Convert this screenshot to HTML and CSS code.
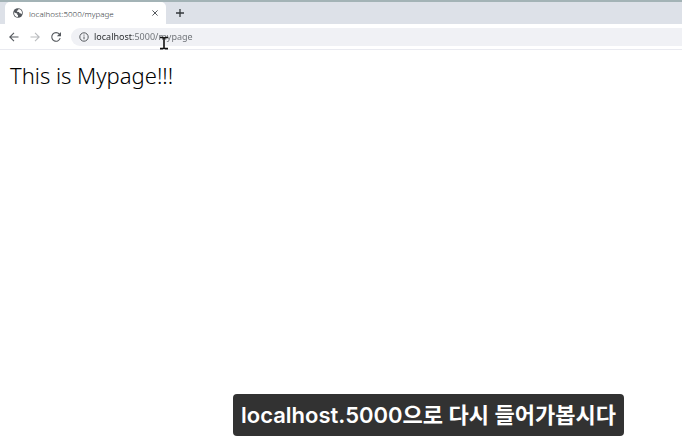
FILE: index.html
```html
<!DOCTYPE html>
<html lang="ko">
<head>
  <meta charset="UTF-8" />
  <meta name="viewport" content="width=device-width, initial-scale=1.0"/>
  <title>localhost:5000/mypage</title>
  <link rel="stylesheet" href="styles.css">
</head>
<body>
  <header class="browser">
    <div class="tab-strip">
      <div class="tab">
        <svg class="favicon" viewBox="0 0 10 10" aria-hidden="true">
          <circle cx="5" cy="5" r="4.8" fill="#53575c"/>
          <path d="M1 4.2 3 5.3 4.2 5.5 4.3 6.7 5.1 7.3 4.8 9C2.6 9 .9 7.2 1 4.2Z" fill="#fff"/>
          <path d="M5.4 1 5.2 2.2 3.8 2.7 4 3.8 6 4 6.6 5.3 8.2 5.5 8.9 6.2C9.6 3.7 8 1.2 5.4 1Z" fill="#fff"/>
        </svg>
        <span class="tab-title">localhost:5000/mypage</span>
        <button type="button" class="tab-close" aria-label="Close tab">
          <svg viewBox="0 0 8 8"><path d="M1.4 1.4 6.6 6.6M6.6 1.4 1.4 6.6"/></svg>
        </button>
      </div>
      <button type="button" class="new-tab" aria-label="New tab">
        <svg viewBox="0 0 10 10"><path d="M5 1V9M1 5H9"/></svg>
      </button>
    </div>

    <div class="toolbar">
      <button type="button" class="nav-btn" aria-label="Back">
        <svg viewBox="0 0 12 12"><path d="M10.5 6H2M6 1.8 1.8 6 6 10.2"/></svg>
      </button>
      <button type="button" class="nav-btn" aria-label="Forward" disabled>
        <svg viewBox="0 0 12 12"><path d="M1.5 6H10M6 1.8 10.2 6 6 10.2"/></svg>
      </button>
      <button type="button" class="nav-btn" aria-label="Reload">
        <svg viewBox="0 0 12 12"><path d="M10.2 7.2A4.3 4.3 0 1 1 9.4 3.2L10.4 4.3"/><path class="fill" d="M11 1V5.3H6.9Z"/></svg>
      </button>
      <div class="address-bar">
        <svg class="info" viewBox="0 0 10 10" aria-hidden="true">
          <circle cx="5" cy="5" r="4.2"/>
          <path d="M5 4.5V7.3M5 2.6V3.6"/>
        </svg>
        <input type="text" class="url" aria-label="Address" value="localhost:5000/mypage">
      </div>
    </div>
  </header>

  <main class="page">
    <h1>This is Mypage!!!</h1>
  </main>

  <svg class="cursor" viewBox="0 0 10 14" aria-hidden="true">
    <path d="M1 1.5H3.6L5 2.3 6.4 1.5H9M5 2V12M1 12.6H3.6L5 11.8 6.4 12.6H9"/>
  </svg>

  <p class="caption">localhost.5000으로 다시 들어가봅시다</p>
</body>
</html>
```

FILE: styles.css
```css
* {
  box-sizing: border-box;
}

body {
  margin: 0;
  min-height: 100vh;
  display: flex;
  flex-direction: column;
  background: white;
  font-family: "Noto Sans", "Noto Sans CJK KR", sans-serif;
}

button {
  padding: 0;
  border: none;
  background: none;
  display: flex;
}

svg {
  fill: none;
  stroke: #55595e;
}

.favicon {
  stroke: none;
}

/* Tabs */
.tab-strip {
  display: flex;
  align-items: center;
  height: 24px;
  padding-left: 5px;
  background: #dde1e8;
  border-top: 2px solid #a3b3b6;
}

.tab {
  display: flex;
  align-items: center;
  width: 161px;
  height: 22px;
  padding: 0 7px 0 8px;
  background: white;
  border-radius: 5px 5px 0 0;
}

.favicon {
  width: 10px;
  height: 10px;
}

.tab-title {
  flex: 1;
  margin-left: 6px;
  color: #34383c;
  font-size: 8px;
  font-weight: 300;
}

.tab-close svg {
  width: 8px;
  height: 8px;
}

.new-tab {
  margin-left: 9px;
}

.new-tab svg {
  width: 10px;
  height: 10px;
  stroke: #33373b;
  stroke-width: 1.3;
}

/* Toolbar */
.toolbar {
  display: flex;
  align-items: center;
  gap: 9px;
  height: 26px;
  padding-left: 8px;
  border-bottom: 1px solid #e9eaf0;
}

.nav-btn svg {
  width: 12px;
  height: 12px;
  stroke-width: 1.1;
}

.nav-btn:disabled svg {
  stroke: #b9bbbe;
}

.nav-btn .fill {
  fill: #55595e;
  stroke: none;
}

.address-bar {
  flex: 1;
  display: flex;
  align-items: center;
  gap: 5px;
  height: 18px;
  padding-left: 8px;
  background: #f0f1f5;
  border-radius: 9px 0 0 9px;
}

.info {
  width: 10px;
  height: 10px;
}

/* Host part is darker than the port and path */
.url {
  flex: 1;
  padding: 0;
  border: none;
  outline: none;
  color: transparent;
  background: linear-gradient(to right, #26292c 39px, #6a6e73 39px);
  -webkit-background-clip: text;
  background-clip: text;
  font-family: inherit;
  font-size: 9px;
}

/* Page content */
.page {
  flex: 1;
  padding: 10px;
}

.page h1 {
  margin: 0;
  color: black;
  font-size: 22px;
  font-weight: 300;
  line-height: 30px;
}

.cursor {
  position: absolute;
  left: 159px;
  top: 36px;
  width: 10px;
  height: 14px;
  stroke: #111;
  stroke-width: 1.6;
}

.caption {
  position: absolute;
  right: 58px;
  bottom: 11px;
  margin: 0;
  padding: 0 8px;
  background: #323232;
  border-radius: 4px;
  color: white;
  font-family: Inter, "Noto Sans CJK KR", sans-serif;
  font-size: 22px;
  font-weight: 600;
  line-height: 42px;
  white-space: nowrap;
}
```
